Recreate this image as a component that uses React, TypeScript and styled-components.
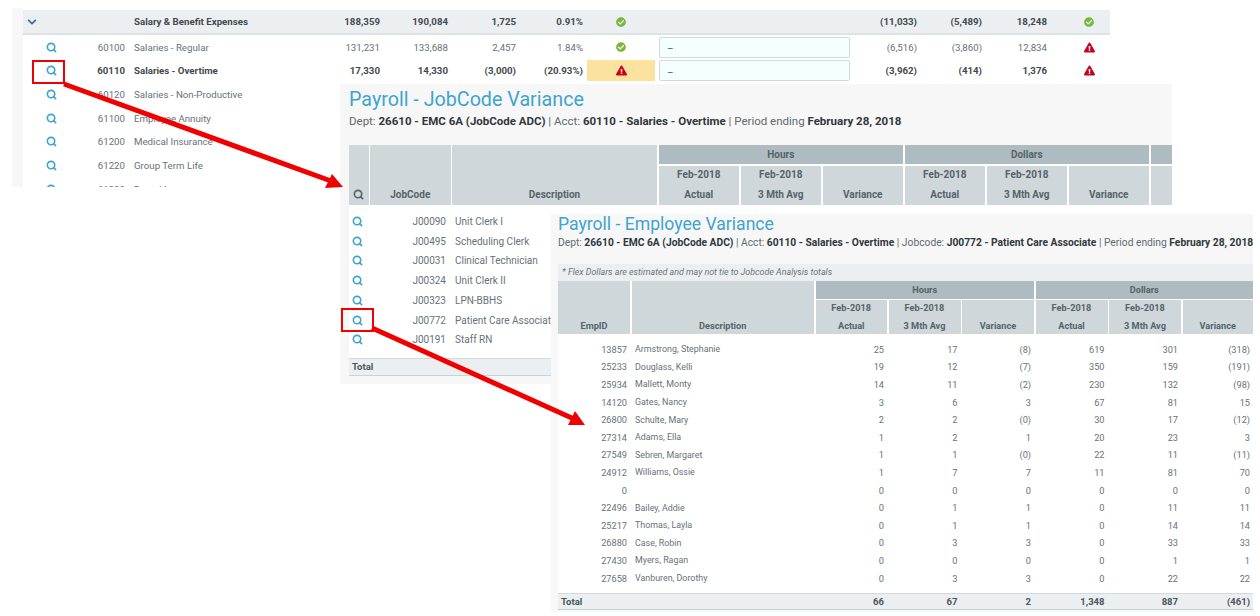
import React from 'react';
import styled, { createGlobalStyle } from 'styled-components';
import { Search } from 'lucide-react';
import { FaCheckCircle, FaChevronDown, FaExclamationTriangle } from 'react-icons/fa';

const GlobalStyle = createGlobalStyle`
  html, body {
    margin: 0;
    background: #fff;
    overflow: hidden;
  }
  * {
    box-sizing: border-box;
  }
`;

const Canvas = styled.div`
  position: relative;
  width: 1260px;
  height: 616px;
  overflow: hidden;
  font-family: Roboto, 'Liberation Sans', sans-serif;
  color: #5f6b70;
`;

/* ---- the three pasted windows ---- */

const SummaryWindow = styled.section`
  position: absolute;
  left: 12px;
  top: 8px;
  width: 1098px;
  height: 179px;
  padding: 2px 0 0 11px;
  background: linear-gradient(to right, #f7f7f7 11px, #fff 11px);
  overflow: hidden;
  font-size: 9.7px;
`;

const JobCodeWindow = styled.section`
  position: absolute;
  left: 340px;
  top: 84px;
  width: 832px;
  height: 300px;
  padding: 3px 0 0 9px;
  background: #f7f7f7;
  overflow: hidden;
`;

const EmployeeWindow = styled.section`
  position: absolute;
  left: 551px;
  top: 214px;
  width: 702px;
  height: 398px;
  padding-left: 7px;
  background: #f7f7f7;
  overflow: hidden;
`;

/* ---- summary table ---- */

const SummaryRow = styled.div<{ $head?: boolean; $strong?: boolean }>`
  display: grid;
  grid-template-columns: 56px 50px 187px 68px 68px 68px 67px 68px 199px 67px 65px 65px 1fr;
  align-items: center;
  height: ${p => (p.$head ? '25.2px' : '23.7px')};
  background: ${p => (p.$head ? '#eceff1' : '#fff')};
  border-bottom: ${p => (p.$head ? '2px solid #dde2e5' : 'none')};
  font-weight: ${p => (p.$head || p.$strong ? 700 : 400)};
  color: ${p => (p.$head || p.$strong ? '#3f4a4f' : '#677277')};
`;

const Num = styled.span`
  text-align: right;
  padding-right: 4px;
  white-space: nowrap;
`;

const Label = styled.span`
  padding-left: 5px;
  white-space: nowrap;
`;

const IconCell = styled.span<{ $warn?: boolean }>`
  display: flex;
  align-items: center;
  justify-content: center;
  height: 21px;
  background: ${p => (p.$warn ? '#fbe29f' : 'transparent')};
`;

const ChevronCell = styled.span`
  display: flex;
  padding-left: 4px;
  color: #2a6f9e;
  font-size: 10px;
`;

const StatusCell = styled.span`
  display: flex;
  padding-left: 33px;
`;

const NoteCell = styled.span`
  padding: 0 4px;
`;

const NoteInput = styled.input`
  display: block;
  width: 191px;
  height: 21px;
  padding: 3px 7px 0;
  border: 1px solid #d3dade;
  border-radius: 2px;
  background: #f4ffff;
  color: #666;
  font: 400 10px Roboto, sans-serif;
  outline: none;
`;

const Ok = styled(FaCheckCircle)`
  color: #78b83c;
  font-size: 10px;
`;

const Warn = styled(FaExclamationTriangle)`
  color: #c9001e;
  font-size: 11px;
`;

const Lens = styled(Search).attrs({ size: 11, strokeWidth: 3.6 })`
  display: block;
  color: #3fa4cf;
`;

const HeadLens = styled(Search).attrs({ size: 11, strokeWidth: 3.6 })`
  display: block;
  margin-bottom: 5px;
  color: #566368;
`;

/* ---- shared report heading ---- */

const Title = styled.h1<{ $small?: boolean }>`
  margin: 0;
  font-weight: 400;
  color: #3fa4cf;
  font-size: ${p => (p.$small ? '17.6px' : '19.7px')};
  line-height: ${p => (p.$small ? '20px' : '26px')};
`;

const SubTitle = styled.p<{ $small?: boolean }>`
  margin: ${p => (p.$small ? '2px 0 14px' : '0 0 16px')};
  font-size: ${p => (p.$small ? '10.27px' : '11.5px')};
  line-height: ${p => (p.$small ? '14px' : '16px')};
  color: #5f6b70;
  white-space: nowrap;

  b {
    color: #2f383c;
    font-weight: 700;
  }
`;

const FlexNote = styled.div`
  height: 17px;
  padding-left: 4px;
  background: #eceff1;
  font-size: 8.9px;
  font-style: italic;
  line-height: 17px;
  color: #6a757a;
`;

/* ---- report header grids ---- */

const jobCols = '19.5px 80.5px 205px repeat(6, 80.5px) 22px';
const empCols = '72px 182.5px 71.5px 72px 72px 72px 72px 70.5px';

const HeadGrid = styled.div<{ $cols: string; $group: number; $sub: number }>`
  display: grid;
  grid-template-columns: ${p => p.$cols};
  grid-template-rows: ${p => p.$group}px ${p => p.$sub}px;
  gap: 1.5px;
  background: #fff;
  font-weight: 700;
  color: #566368;
`;

const HeadCell = styled.div<{ $rows?: number; $span?: number; $group?: boolean; $size: number }>`
  display: flex;
  flex-direction: column;
  justify-content: ${p => (p.$group ? 'center' : 'flex-end')};
  align-items: center;
  grid-row: ${p => (p.$rows ? `span ${p.$rows}` : 'auto')};
  grid-column: ${p => (p.$span ? `span ${p.$span}` : 'auto')};
  background: ${p => (p.$group ? '#aebbc0' : '#cfd7da')};
  font-size: ${p => p.$size}px;
  line-height: ${p => (p.$size > 9.5 ? '20px' : '17.5px')};
  white-space: nowrap;
`;

/* ---- report bodies ---- */

const ReportBody = styled.div<{ $top: number }>`
  padding-top: ${p => p.$top}px;
  background: #fff;
`;

const JobRow = styled.div`
  display: grid;
  grid-template-columns: 21px 80px 1fr;
  align-items: center;
  height: 19.75px;
  font-size: 10px;
  color: #677277;
`;

const JobLens = styled.span`
  display: flex;
  justify-content: center;
  padding-right: 4px;
`;

const TotalBar = styled.div<{ $cols?: string; $h: number }>`
  display: grid;
  grid-template-columns: ${p => p.$cols || '1fr'};
  column-gap: 1.5px;
  align-items: center;
  height: ${p => p.$h}px;
  background: #eceff1;
  border-top: 1px solid #d3dade;
  border-bottom: 1.5px solid #c9d2d6;
  font-size: 9.5px;
  font-weight: 700;
  color: #4a555a;
`;

const TotalLabel = styled.span<{ $span?: number }>`
  padding-left: 3px;
  grid-column: ${p => (p.$span ? `span ${p.$span}` : 'auto')};
`;

const EmpRow = styled.div`
  display: grid;
  grid-template-columns: ${empCols};
  column-gap: 1.5px;
  align-items: center;
  height: 17.6px;
  font-size: 9.2px;
  color: #677277;
`;

const EmpNum = styled.span`
  padding-right: 3px;
  text-align: right;
`;

const EmpName = styled.span`
  padding-left: 3.5px;
  font-size: 8.9px;
  white-space: nowrap;
`;

/* ---- annotations on top of the pasted windows ---- */

const Marker = styled.div<{ $x: number; $y: number }>`
  position: absolute;
  left: ${p => p.$x}px;
  top: ${p => p.$y}px;
  width: 33px;
  height: 24px;
  border: 2px solid #f00000;
  z-index: 5;
`;

const ArrowLayer = styled.svg`
  position: absolute;
  left: 0;
  top: 0;
  z-index: 4;
  pointer-events: none;
`;

type SummaryData = {
  code: string;
  name: string;
  vals?: string[];
  strong?: boolean;
  flag?: boolean;
};

const summaryRows: SummaryData[] = [
  { code: '60100', name: 'Salaries - Regular', vals: ['131,231', '133,688', '2,457', '1.84%', '(6,516)', '(3,860)', '12,834'] },
  { code: '60110', name: 'Salaries - Overtime', vals: ['17,330', '14,330', '(3,000)', '(20.93%)', '(3,962)', '(414)', '1,376'], strong: true, flag: true },
  { code: '60120', name: 'Salaries - Non-Productive' },
  { code: '61100', name: 'Employee Annuity' },
  { code: '61200', name: 'Medical Insurance' },
  { code: '61220', name: 'Group Term Life' },
  { code: '61230', name: 'Dental Insurance' },
];

const jobRows = [
  ['J00090', 'Unit Clerk I'],
  ['J00495', 'Scheduling Clerk'],
  ['J00031', 'Clinical Technician'],
  ['J00324', 'Unit Clerk II'],
  ['J00323', 'LPN-BBHS'],
  ['J00772', 'Patient Care Associate'],
  ['J00191', 'Staff RN'],
];

const empRows = [
  ['13857', 'Armstrong, Stephanie', '25', '17', '(8)', '619', '301', '(318)'],
  ['25233', 'Douglass, Kelli', '19', '12', '(7)', '350', '159', '(191)'],
  ['25934', 'Mallett, Monty', '14', '11', '(2)', '230', '132', '(98)'],
  ['14120', 'Gates, Nancy', '3', '6', '3', '67', '81', '15'],
  ['26800', 'Schulte, Mary', '2', '2', '(0)', '30', '17', '(12)'],
  ['27314', 'Adams, Ella', '1', '2', '1', '20', '23', '3'],
  ['27549', 'Sebren, Margaret', '1', '1', '(0)', '22', '11', '(11)'],
  ['24912', 'Williams, Ossie', '1', '7', '7', '11', '81', '70'],
  ['0', '', '0', '0', '0', '0', '0', '0'],
  ['22496', 'Bailey, Addie', '0', '1', '1', '0', '11', '11'],
  ['25217', 'Thomas, Layla', '0', '1', '1', '0', '14', '14'],
  ['26880', 'Case, Robin', '0', '3', '3', '0', '33', '33'],
  ['27430', 'Myers, Ragan', '0', '0', '0', '0', '1', '1'],
  ['27658', 'Vanburen, Dorothy', '0', '3', '3', '0', '22', '22'],
];

const Stacked = ({ lines }: { lines: string[] }) => (
  <>
    {lines.map(line => (
      <span key={line}>{line}</span>
    ))}
  </>
);

const subHeads = [['Feb-2018', 'Actual'], ['Feb-2018', '3 Mth Avg'], ['Variance']];

export default function App() {
  return (
    <Canvas>
      <GlobalStyle />

      <SummaryWindow>
        <SummaryRow $head>
          <ChevronCell><FaChevronDown /></ChevronCell>
          <span />
          <Label>Salary &amp; Benefit Expenses</Label>
          <Num>188,359</Num>
          <Num>190,084</Num>
          <Num>1,725</Num>
          <Num>0.91%</Num>
          <IconCell><Ok /></IconCell>
          <span />
          <Num>(11,033)</Num>
          <Num>(5,489)</Num>
          <Num>18,248</Num>
          <StatusCell><Ok /></StatusCell>
        </SummaryRow>
        {summaryRows.map(row => (
          <SummaryRow key={row.code} $strong={row.strong}>
            <IconCell><Lens /></IconCell>
            <Num>{row.code}</Num>
            <Label>{row.name}</Label>
            {row.vals && (
              <>
                <Num>{row.vals[0]}</Num>
                <Num>{row.vals[1]}</Num>
                <Num>{row.vals[2]}</Num>
                <Num>{row.vals[3]}</Num>
                <IconCell $warn={row.flag}>{row.flag ? <Warn /> : <Ok />}</IconCell>
                <NoteCell><NoteInput readOnly value="–" /></NoteCell>
                <Num>{row.vals[4]}</Num>
                <Num>{row.vals[5]}</Num>
                <Num>{row.vals[6]}</Num>
                <StatusCell><Warn /></StatusCell>
              </>
            )}
          </SummaryRow>
        ))}
      </SummaryWindow>

      <JobCodeWindow>
        <Title>Payroll - JobCode Variance</Title>
        <SubTitle>
          Dept: <b>26610 - EMC 6A (JobCode ADC)</b> | Acct: <b>60110 - Salaries - Overtime</b> | Period ending <b>February 28, 2018</b>
        </SubTitle>
        <HeadGrid $cols={jobCols} $group={19} $sub={39}>
          <HeadCell $rows={2} $size={10}>
            <HeadLens />
          </HeadCell>
          <HeadCell $rows={2} $size={10}>JobCode</HeadCell>
          <HeadCell $rows={2} $size={10}>Description</HeadCell>
          <HeadCell $span={3} $group $size={10}>Hours</HeadCell>
          <HeadCell $span={3} $group $size={10}>Dollars</HeadCell>
          <HeadCell $group $size={10} />
          {[...subHeads, ...subHeads].map((lines, i) => (
            <HeadCell key={i} $size={10}><Stacked lines={lines} /></HeadCell>
          ))}
          <HeadCell $size={10} />
        </HeadGrid>
        <ReportBody $top={7}>
          {jobRows.map(([code, name]) => (
            <JobRow key={code}>
              <JobLens><Lens /></JobLens>
              <Num>{code}</Num>
              <Label>{name}</Label>
            </JobRow>
          ))}
          <ReportBody $top={8}>
            <TotalBar $h={18}>
              <TotalLabel>Total</TotalLabel>
            </TotalBar>
          </ReportBody>
        </ReportBody>
      </JobCodeWindow>

      <EmployeeWindow>
        <Title $small>Payroll - Employee Variance</Title>
        <SubTitle $small>
          Dept: <b>26610 - EMC 6A (JobCode ADC)</b> | Acct: <b>60110 - Salaries - Overtime</b> | Jobcode: <b>J00772 - Patient Care Associate</b> | Period ending <b>February 28, 2018</b>
        </SubTitle>
        <FlexNote>* Flex Dollars are estimated and may not tie to Jobcode Analysis totals</FlexNote>
        <HeadGrid $cols={empCols} $group={17.5} $sub={34}>
          <HeadCell $rows={2} $size={9.2}>EmpID</HeadCell>
          <HeadCell $rows={2} $size={9.2}>Description</HeadCell>
          <HeadCell $span={3} $group $size={9.2}>Hours</HeadCell>
          <HeadCell $span={3} $group $size={9.2}>Dollars</HeadCell>
          {[...subHeads, ...subHeads].map((lines, i) => (
            <HeadCell key={i} $size={9.2}><Stacked lines={lines} /></HeadCell>
          ))}
        </HeadGrid>
        <ReportBody $top={6.5}>
          {empRows.map(([id, name, ...vals]) => (
            <EmpRow key={id}>
              <EmpNum>{id}</EmpNum>
              <EmpName>{name}</EmpName>
              {vals.map((val, i) => (
                <EmpNum key={i}>{val}</EmpNum>
              ))}
            </EmpRow>
          ))}
          <ReportBody $top={6}>
            <TotalBar $cols={empCols} $h={17}>
              <TotalLabel $span={2}>Total</TotalLabel>
              {['66', '67', '2', '1,348', '887', '(461)'].map(val => (
                <EmpNum key={val}>{val}</EmpNum>
              ))}
            </TotalBar>
          </ReportBody>
        </ReportBody>
      </EmployeeWindow>

      <ArrowLayer width="1260" height="616" viewBox="0 0 1260 616">
        <line x1="64" y1="84" x2="331" y2="181" stroke="#f00000" strokeWidth="5" />
        <polygon points="343,187 325,188 332,174" fill="#f00000" />
        <line x1="372" y1="328" x2="574" y2="419" stroke="#f00000" strokeWidth="5" />
        <polygon points="585,425 568,425 575,411" fill="#f00000" />
      </ArrowLayer>

      <Marker $x={32} $y={60} />
      <Marker $x={341} $y={308} />
    </Canvas>
  );
}
